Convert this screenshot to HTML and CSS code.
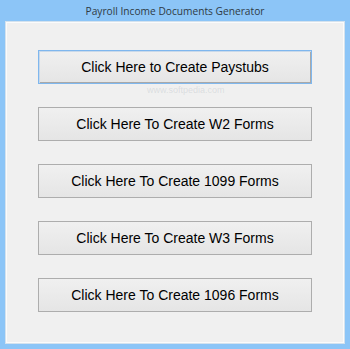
FILE: index.html
```html
<!DOCTYPE html>
<html lang="en">
  <head>
    <meta charset="UTF-8" />
    <title>Payroll Income Documents Generator</title>
    <link rel="stylesheet" href="styles.css">
  </head>
  <body>
    <div class="window">
      <div class="titlebar">Payroll Income Documents Generator</div>
      <div class="client">
        <button class="btn focused">Click Here to Create Paystubs</button>
        <div class="mark">www.softpedia.com</div>
        <button class="btn">Click Here To Create W2 Forms</button>
        <button class="btn">Click Here To Create 1099 Forms</button>
        <button class="btn">Click Here To Create W3 Forms</button>
        <button class="btn">Click Here To Create 1096 Forms</button>
      </div>
    </div>
  </body>
</html>
```

FILE: styles.css
```css
* {
  margin: 0;
  padding: 0;
  box-sizing: border-box;
}
body {
  width: 350px;
  height: 349px;
  overflow: hidden;
  background: #ffffff;
}
.window {
  width: 350px;
  height: 349px;
  background: #8cc5f7;
  padding: 0 6px 6px 6px;
  display: flex;
  flex-direction: column;
}
.titlebar {
  height: 22px;
  line-height: 23px;
  text-align: center;
  font-family: "Open Sans", "Liberation Sans", sans-serif;
  font-size: 10.2px;
  color: #2f3a44;
}
.client {
  flex: 1;
  background: #f0f0f0;
  border: 1px solid #fbfbfb;
  outline: 1px solid #d4e2ee;
  display: flex;
  flex-direction: column;
  align-items: center;
  padding-top: 27px;
  position: relative;
}
.btn {
  width: 274px;
  height: 34px;
  margin-bottom: 23px;
  border: 1px solid #adadad;
  background: linear-gradient(#f0f0f0, #e5e5e5);
  font-family: "Liberation Sans", Arial, sans-serif;
  font-size: 14px;
  color: #000000;
}
.btn.focused {
  border: 1px solid #7fb7ee;
  box-shadow: inset 1px 1px 0 #c9d9ea, inset -1px -1px 0 #a9a9a9;
}
.mark {
  position: absolute;
  top: 62px;
  left: 140px;
  font-family: "Liberation Sans", sans-serif;
  font-size: 9px;
  color: rgba(150, 160, 175, 0.25);
}
```
